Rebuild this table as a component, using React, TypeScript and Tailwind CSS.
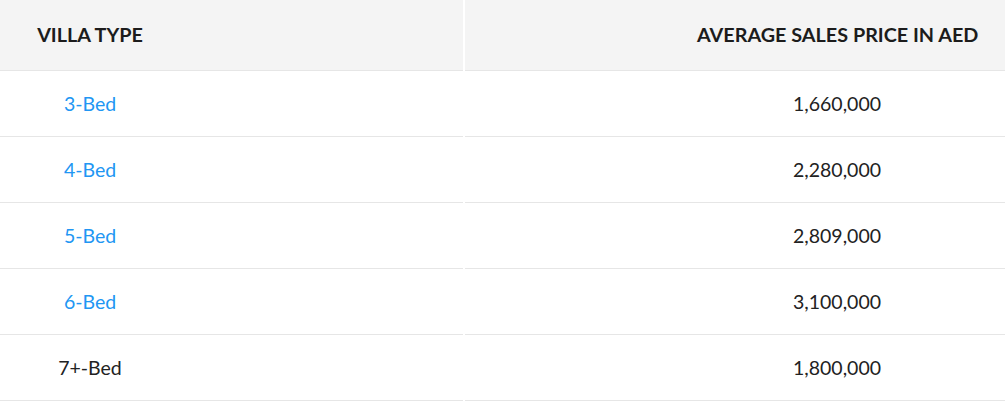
import React from "react";

const rows: { type: string; price: string; link: boolean }[] = [
  { type: "3-Bed", price: "1,660,000", link: true },
  { type: "4-Bed", price: "2,280,000", link: true },
  { type: "5-Bed", price: "2,809,000", link: true },
  { type: "6-Bed", price: "3,100,000", link: true },
  { type: "7+-Bed", price: "1,800,000", link: false },
];

export default function App() {
  return (
    <div className="w-[1005px] h-[407px] bg-white font-['Lato','Liberation_Sans',sans-serif] text-[#222]">
      <div className="grid grid-cols-[463px_540px] gap-x-[2px]">
        <div className="h-[71px] bg-[#f4f4f4] border-b border-[#e6e6e6] flex items-center pl-[36px]">
          <span className="w-[108px] text-center text-[19.8px] font-bold uppercase text-[#1c1c1c] whitespace-nowrap">
            Villa Type
          </span>
        </div>
        <div className="h-[71px] bg-[#f4f4f4] border-b border-[#e6e6e6] flex items-center justify-end pr-[28px]">
          <span className="w-[280px] text-center text-[19.8px] font-bold uppercase text-[#1c1c1c] whitespace-nowrap">
            Average Sales Price in AED
          </span>
        </div>
        {rows.map((r) => (
          <React.Fragment key={r.type}>
            <div className="h-[66px] border-b border-[#e6e6e6] flex items-center pl-[36px]">
              <span
                className={
                  r.link
                    ? "w-[108px] text-center text-[19.5px] text-[#2196f3] whitespace-nowrap"
                    : "w-[108px] text-center text-[19.5px] text-[#222] whitespace-nowrap"
                }
              >
                {r.type}
              </span>
            </div>
            <div className="h-[66px] border-b border-[#e6e6e6] flex items-center justify-end pr-[28px]">
              <span className="w-[280px] text-center text-[19.5px] text-[#222] whitespace-nowrap">{r.price}</span>
            </div>
          </React.Fragment>
        ))}
      </div>
    </div>
  );
}
